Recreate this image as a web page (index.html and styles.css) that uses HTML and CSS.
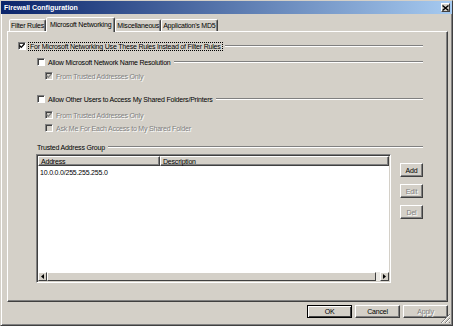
FILE: index.html
```html
<!DOCTYPE html>
<html lang="en">
    <head>
        <meta charset="UTF-8">
        <title>Firewall Configuration</title>
        <link rel="stylesheet" href="styles.css">
    </head>
    <body>
        <div class="window">
            <div class="titlebar">
                <span class="title">Firewall Configuration</span>
                <span class="close">
                    <svg width="7" height="6" viewBox="0 0 7 6"><path d="M0.5 0.5 L6.5 5.5 M6.5 0.5 L0.5 5.5" stroke="#000" stroke-width="1.4"/></svg>
                </span>
            </div>
            <div class="content">
                <div class="tabs">
                    <div class="tab">Filter Rules</div>
                    <div class="tab active">Microsoft Networking</div>
                    <div class="tab">Miscellaneous</div>
                    <div class="tab">Application's MD5</div>
                </div>
                <div class="panel">
                    <div class="row">
                        <span class="check"><svg width="6" height="6" viewBox="0 0 6 6"><path d="M0.5 2.5 L2.3 4.4 L5.6 0.8" stroke="#000" stroke-width="1.3" fill="none"/></svg></span>
                        <span class="focus">For Microsoft Networking Use These Rules Instead of Filter Rules</span>
                        <span class="groove"></span>
                    </div>
                    <div class="row lvl1 sp4">
                        <span class="check"></span>
                        <span>Allow Microsoft Network Name Resolution</span>
                        <span class="groove"></span>
                    </div>
                    <div class="row lvl2 sp2 disabled">
                        <span class="check dis"><svg width="6" height="6" viewBox="0 0 6 6"><path d="M0.5 2.5 L2.3 4.4 L5.6 0.8" stroke="#808080" stroke-width="1.3" fill="none"/></svg></span>
                        <span>From Trusted Addresses Only</span>
                    </div>
                    <div class="row lvl1 sp11">
                        <span class="check"></span>
                        <span>Allow Other Users to Access My Shared Folders/Printers</span>
                        <span class="groove"></span>
                    </div>
                    <div class="row lvl2 sp4 disabled">
                        <span class="check dis"><svg width="6" height="6" viewBox="0 0 6 6"><path d="M0.5 2.5 L2.3 4.4 L5.6 0.8" stroke="#808080" stroke-width="1.3" fill="none"/></svg></span>
                        <span>From Trusted Addresses Only</span>
                    </div>
                    <div class="row lvl2 sp1 disabled">
                        <span class="check dis"></span>
                        <span>Ask Me For Each Access to My Shared Folder</span>
                    </div>
                    <div class="row lvl1 sp7">
                        <span>Trusted Address Group</span>
                        <span class="groove"></span>
                    </div>
                    <div class="list-area">
                        <div class="listbox">
                            <div class="list-header">
                                <div class="col col-addr">Address</div>
                                <div class="col col-desc">Description</div>
                            </div>
                            <div class="list-body">
                                <div class="list-row">10.0.0.0/255.255.255.0</div>
                            </div>
                            <div class="hscroll">
                                <span class="arrow"><svg width="3" height="5" viewBox="0 0 3 5"><polygon points="3,0 0,2.5 3,5" fill="#000"/></svg></span>
                                <span class="track"><span class="thumb"></span></span>
                                <span class="arrow"><svg width="3" height="5" viewBox="0 0 3 5"><polygon points="0,0 3,2.5 0,5" fill="#000"/></svg></span>
                            </div>
                        </div>
                        <div class="side">
                            <button class="btn">Add</button>
                            <button class="btn" disabled>Edit</button>
                            <button class="btn" disabled>Del</button>
                        </div>
                    </div>
                </div>
                <div class="actions">
                    <button class="btn default">OK</button>
                    <button class="btn">Cancel</button>
                    <button class="btn" disabled>Apply</button>
                </div>
            </div>
            <svg class="grip" width="11" height="11" viewBox="0 0 11 11">
                <path d="M10 1 L1 10 M10 5 L5 10 M10 9 L9 10" stroke="#808080" stroke-width="1"/>
                <path d="M10 2 L2 10 M10 6 L6 10" stroke="#fff" stroke-width="1"/>
            </svg>
        </div>
    </body>
</html>
```

FILE: styles.css
```css
* {
    box-sizing: border-box;
}
body {
    margin: 0;
    background: #d4d0c8;
    font-family: "Liberation Sans", Arial, sans-serif;
    font-size: 7px;
    letter-spacing: -0.2px;
    color: #000;
}
.window {
    position: relative;
    width: 453px;
    height: 326px;
    background: #d4d0c8;
    border: 1px solid;
    border-color: #d4d0c8 #404040 #404040 #d4d0c8;
    box-shadow: inset 1px 1px #fff, inset -1px -1px #808080;
}
.titlebar {
    height: 13px;
    display: flex;
    align-items: center;
    justify-content: space-between;
    padding: 0 2px 0 3px;
    background: linear-gradient(to right, #0a246a, #a6caf0);
    color: #fff;
    font-weight: bold;
    letter-spacing: 0;
}
.close {
    width: 9px;
    height: 9px;
    display: flex;
    align-items: center;
    justify-content: center;
    background: #d4d0c8;
    border: 1px solid;
    border-color: #fff #404040 #404040 #fff;
}
.content {
    padding: 3px 4px 0 6px;
}
.tabs {
    display: flex;
    align-items: flex-end;
    height: 14px;
    padding-left: 2px;
}
.tab {
    height: 12px;
    padding: 0 1px;
    display: flex;
    align-items: center;
    background: #d4d0c8;
    border: 1px solid;
    border-bottom: 0;
    border-color: #fff #404040 transparent #fff;
    border-radius: 2px 2px 0 0;
    box-shadow: inset -1px 0 #808080;
    white-space: nowrap;
}
.tab.active {
    position: relative;
    z-index: 1;
    height: 15px;
    margin-bottom: -1px;
    padding: 0 3px 1px;
}
.panel {
    height: 271px;
    padding: 8px 24px 0 10px;
    background: #d4d0c8;
    border: 1px solid;
    border-color: #fff #404040 #404040 #fff;
    box-shadow: inset -1px -1px #808080;
}
.row {
    display: flex;
    align-items: center;
    height: 12px;
    white-space: nowrap;
}
.lvl1 { margin-left: 19px; }
.lvl2 { margin-left: 27px; }
.sp1 { margin-top: 1px; }
.sp2 { margin-top: 2px; }
.sp4 { margin-top: 4px; }
.sp7 { margin-top: 7px; }
.sp11 { margin-top: 11px; }
.groove {
    flex: 1;
    height: 2px;
    margin-left: 3px;
    border-top: 1px solid #808080;
    border-bottom: 1px solid #fff;
}
.check {
    width: 8px;
    height: 8px;
    margin-right: 3px;
    display: flex;
    align-items: center;
    justify-content: center;
    background: #fff;
    border: 1px solid;
    border-color: #808080 #fff #fff #808080;
    box-shadow: inset 1px 1px #404040;
}
.check.dis {
    background: #d4d0c8;
}
.focus {
    padding: 0 1px;
    outline: 1px dotted #000;
}
.disabled {
    color: #808080;
    text-shadow: 1px 1px 0 #fff;
}
.list-area {
    display: flex;
    margin: 1px 0 0 18px;
}
.listbox {
    width: 357px;
    height: 129px;
    padding: 1px;
    display: flex;
    flex-direction: column;
    background: #fff;
    border: 1px solid;
    border-color: #808080 #fff #fff #808080;
    box-shadow: inset 1px 1px #404040, inset -1px -1px #d4d0c8;
}
.list-header {
    display: flex;
    height: 10px;
}
.col {
    display: flex;
    align-items: center;
    padding-left: 2px;
    background: #d4d0c8;
    border: 1px solid;
    border-color: #fff #404040 #404040 #fff;
    box-shadow: inset -1px -1px #808080;
}
.col-addr { width: 122px; }
.col-desc { flex: 1; }
.list-body {
    flex: 1;
    padding-left: 2px;
}
.list-row {
    height: 12px;
    display: flex;
    align-items: center;
}
.hscroll {
    display: flex;
    height: 9px;
}
.arrow {
    width: 9px;
    height: 9px;
    display: flex;
    align-items: center;
    justify-content: center;
    background: #d4d0c8;
    border: 1px solid;
    border-color: #fff #404040 #404040 #fff;
}
.track {
    flex: 1;
    display: flex;
    background: #ebe9e4;
}
.thumb {
    width: 329px;
    background: #d4d0c8;
    border: 1px solid;
    border-color: #fff #404040 #404040 #fff;
}
.side {
    display: flex;
    flex-direction: column;
    gap: 7px;
    margin-left: 9px;
    padding-top: 9px;
}
.btn {
    width: 23px;
    height: 14px;
    padding: 0;
    font: inherit;
    letter-spacing: inherit;
    color: #000;
    background: #d4d0c8;
    border: 1px solid;
    border-color: #fff #404040 #404040 #fff;
    box-shadow: inset -1px -1px #808080;
}
.btn:disabled {
    color: #808080;
    text-shadow: 1px 1px 0 #fff;
}
.actions {
    display: flex;
    justify-content: flex-end;
    gap: 3px;
    margin-top: 3px;
}
.actions .btn {
    width: 45px;
    height: 13px;
}
.btn.default {
    border-color: #000;
    box-shadow: inset 1px 1px #fff, inset -1px -1px #404040;
}
.grip {
    position: absolute;
    right: 1px;
    bottom: 1px;
}
```
